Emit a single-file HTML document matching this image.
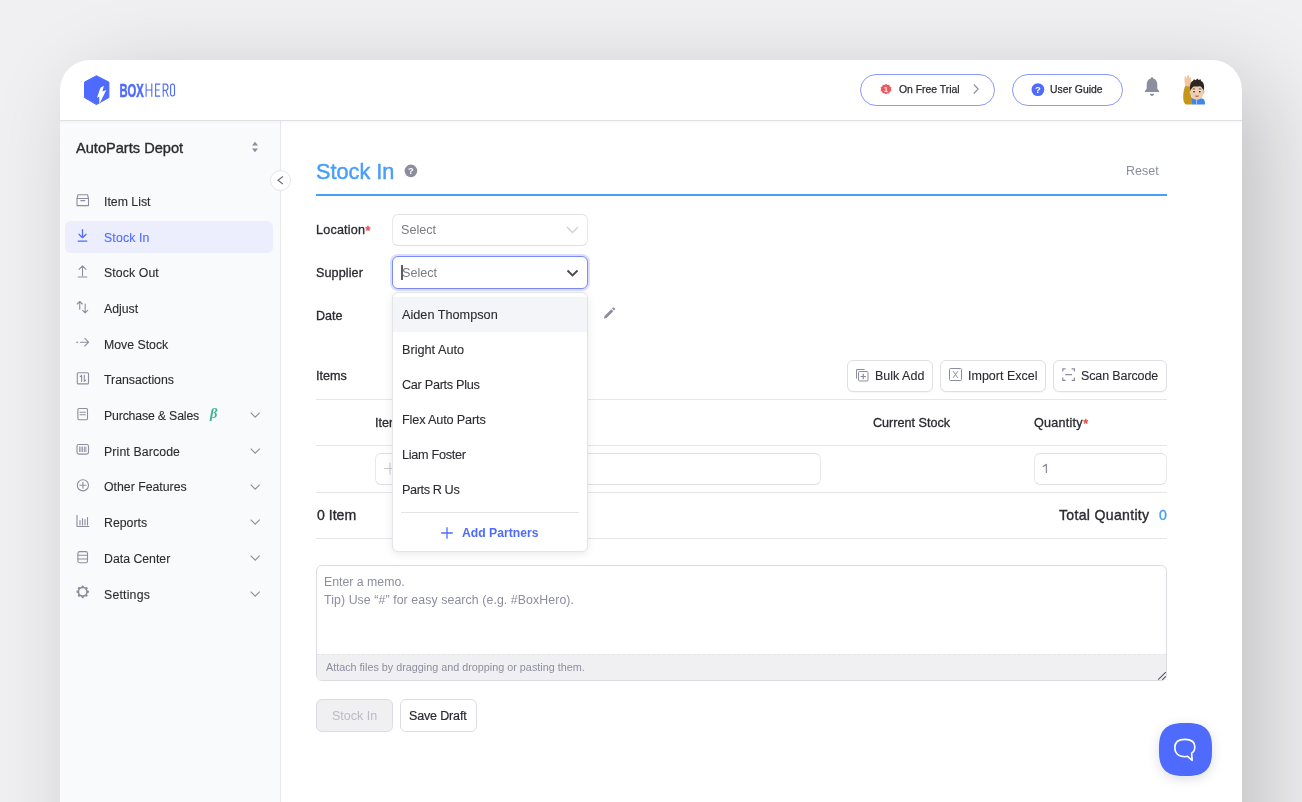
<!DOCTYPE html>
<html><head><meta charset="utf-8">
<style>
*{box-sizing:border-box;margin:0;padding:0}
html,body{width:1302px;height:802px;overflow:hidden}
body{-webkit-font-smoothing:antialiased;background:#f0f0f2;font-family:"Liberation Sans",sans-serif;color:#2a2b30;position:relative}
.abs{position:absolute}
.t{position:absolute;white-space:nowrap;line-height:1;will-change:transform}
.ic{position:absolute;overflow:visible;will-change:transform}
.ast{color:#f0474c;-webkit-text-stroke-width:0.5px;font-size:12.6px;margin-left:0.4px;position:relative;top:0.5px;letter-spacing:0;line-height:0}
</style></head>
<body>
<div class="abs" style="left:60px;top:60px;width:1182px;height:840px;background:#fff;border-radius:30px 30px 0 0;box-shadow:23px 23px 90px rgba(0,0,0,0.2)"></div>
<div class="abs" style="left:60px;top:121px;width:220px;height:681px;background:#f9fafc"></div>
<div class="abs" style="left:280px;top:121px;width:1px;height:681px;background:#e8e8ec"></div>
<div class="abs" style="left:60px;top:120px;width:1182px;height:1px;background:#e0e0e5"></div>
<div class="abs" style="left:60px;top:121px;width:1182px;height:3px;background:linear-gradient(rgba(0,0,0,0.035),rgba(0,0,0,0))"></div>
<svg class="ic" style="left:83px;top:74px;" width="28" height="32" viewBox="0 0 28 32"><path d="M13.4 1.75 L25.9 8.1 V23.6 L13.4 30.6 L1.5 23.6 V8.1 Z" fill="#4f6bfd" stroke="#4f6bfd" stroke-width="1.0" stroke-linejoin="round"/><path d="M20.9 11.8 L17.4 13.8 L14.0 23.8 L16.2 22.8 L16.4 30 L23.3 16.0 L19.4 17.5 Z" fill="#fff"/></svg>
<svg class="ic" style="left:119px;top:80px;" width="58" height="20" viewBox="0 0 58 20"><text x="0.4" y="16.7" font-family="Liberation Sans" font-weight="bold" font-size="18.3" fill="#4f6bfd" stroke="#4f6bfd" stroke-width="0.5" textLength="24.4" lengthAdjust="spacingAndGlyphs">BOX</text><g fill="none" stroke="#4f6bfd" stroke-width="1.1"><path d="M27.1 3.4 V16.7 M32.8 3.4 V16.7 M27.1 10 H32.8"/><path d="M41.2 4.1 H36.6 V16.1 H41.2 M36.6 10 H40.6"/><path d="M44.2 16.7 V4.1 H46.6 C48.4 4.1 49 5.3 49 7.2 C49 9.2 48.4 10.4 46.6 10.4 H44.2 M46.8 10.4 L49.3 16.7"/><rect x="51.6" y="4.1" width="3.9" height="11.9" rx="1.95"/></g></svg>
<div class="abs" style="left:860px;top:74px;width:135px;height:32px;border:1px solid #8a9af9;border-radius:16px;background:#fff"></div>
<svg class="ic" style="left:879px;top:82px;" width="14" height="14" viewBox="0 0 14 14"><path d="M7 0.8 L8.4 1.9 L10.2 1.7 L10.8 3.4 L12.4 4.3 L11.9 6 L12.4 7.8 L10.8 8.7 L10.2 10.4 L8.4 10.2 L7 11.3 L5.6 10.2 L3.8 10.4 L3.2 8.7 L1.6 7.8 L2.1 6 L1.6 4.3 L3.2 3.4 L3.8 1.7 L5.6 1.9 Z" fill="#f1585d" transform="translate(0,1)"/><text x="7" y="10.2" font-size="7" fill="#fff" text-anchor="middle" font-family="Liberation Sans" font-weight="bold">1</text></svg>
<div class="t" style="left:898.50px;top:84.60px;font-size:10.4px;color:#2a2b30;font-weight:normal;-webkit-text-stroke-width:0.25px;">On Free Trial</div>
<svg class="ic" style="left:972px;top:83px;" width="8" height="12" viewBox="0 0 8 12"><path d="M1.8 1.5 L6.2 6 L1.8 10.5" fill="none" stroke="#8c8e9e" stroke-width="1.1"/></svg>
<div class="abs" style="left:1012px;top:74px;width:111px;height:32px;border:1px solid #8a9af9;border-radius:16px;background:#fff"></div>
<svg class="ic" style="left:1031px;top:83px;" width="14" height="14" viewBox="0 0 14 14"><circle cx="6.9" cy="6.6" r="6.4" fill="#4f6bfd"/><text x="6.9" y="10.2" font-size="9.5" fill="#fff" text-anchor="middle" font-family="Liberation Sans" font-weight="bold">?</text></svg>
<div class="t" style="left:1050.30px;top:84.60px;font-size:10.4px;color:#2a2b30;font-weight:normal;-webkit-text-stroke-width:0.25px;">User Guide</div>
<svg class="ic" style="left:1143px;top:76px;" width="18" height="21" viewBox="0 0 18 21"><path d="M9 1.2 C9.9 1.2 10.2 1.8 10.2 2.5 C13 3.3 14.3 5.6 14.3 8.6 V12.6 L16.2 15.2 V16 H1.8 V15.2 L3.7 12.6 V8.6 C3.7 5.6 5 3.3 7.8 2.5 C7.8 1.8 8.1 1.2 9 1.2 Z" fill="#8c8e9e"/><path d="M6.9 17.8 H11.1 C11.1 19 10.2 19.9 9 19.9 C7.8 19.9 6.9 19 6.9 17.8Z" fill="#8c8e9e"/></svg>
<svg class="ic" style="left:1180px;top:74px;" width="30" height="32" viewBox="0 0 30 32"><path d="M5.6 11.5 C4 14 3 19 3.2 24 C3.3 27 4.2 29.3 5.6 30.4 L12.6 30.4 L12 24 C10.8 22 10.2 19 10.7 12 Z" fill="#c4961a"/><path d="M5.2 11.8 C4.6 8.5 4.3 5 4.6 3.2 C4.9 2 5.8 2 6.1 3 L6.6 5.5 C6.8 2.8 7 1.4 8 1.3 C8.9 1.3 9.1 2.3 9.2 4.5 C9.5 2.8 10.6 2.6 10.9 3.8 C11.2 5.5 11.3 8.5 10.8 12 C9 12.8 6.8 12.8 5.2 11.8 Z" fill="#efc6a2"/><path d="M11.5 24.6 C13.5 24 15 24.2 16.9 25 C19 24.2 21 24 23.5 25 C24.6 26 25.2 28.5 25 30.4 H12.2 Z" fill="#3f86e8"/><path d="M16.6 25 V30.4" stroke="#e8d8d0" stroke-width="0.7"/><ellipse cx="10.6" cy="18.2" rx="1.1" ry="1.7" fill="#e2b08a"/><ellipse cx="23.3" cy="18.2" rx="1.1" ry="1.7" fill="#e2b08a"/><ellipse cx="16.9" cy="18.6" rx="6.7" ry="7.2" fill="#f0cdac"/><path d="M10.4 17.2 C9.2 11 11 7.5 13 6.8 L14 5.2 L15.6 6.2 L17.4 4.6 L18.6 6 L20.6 5.2 L21 6.9 C23.5 7.8 24.8 11 23.7 17.2 C23.4 15.8 22.8 14.8 22.2 14.6 C21.6 13 20.6 12.2 19.6 12.2 C17.6 12.8 15.4 12.6 13.8 12.4 C12.8 12.8 12 13.8 11.8 14.6 C11.2 14.8 10.7 15.8 10.4 17.2 Z" fill="#2f2521"/><path d="M12.6 15.2 Q13.8 14.4 15.1 15 M18.7 15 Q20 14.4 21.2 15.2" stroke="#3a2b25" stroke-width="0.7" fill="none"/><ellipse cx="13.9" cy="17.6" rx="1.2" ry="1.3" fill="#fff"/><ellipse cx="19.9" cy="17.6" rx="1.2" ry="1.3" fill="#fff"/><circle cx="14" cy="17.7" r="0.85" fill="#2a1e1a"/><circle cx="19.8" cy="17.7" r="0.85" fill="#2a1e1a"/><path d="M14.6 21.8 Q16.9 23.9 19.3 21.8 Z" fill="#8e3e34"/></svg>
<div class="t" style="left:75.60px;top:141.34px;font-size:14.6px;color:#2a2b30;font-weight:normal;-webkit-text-stroke-width:0.35px;">AutoParts Depot</div>
<svg class="ic" style="left:251px;top:141px;" width="8" height="12" viewBox="0 0 8 12"><path d="M4 0.8 L7 4.5 H1 Z M4 11.2 L7 7.5 H1 Z" fill="#8c8e9e"/></svg>
<div class="abs" style="left:270px;top:170px;width:21px;height:21px;border:1px solid #e6e6ea;border-radius:50%;background:#fff"></div>
<svg class="ic" style="left:276px;top:176px;" width="9" height="9" viewBox="0 0 9 9"><path d="M6.9 0.6 L2 4.3 L6.9 8" fill="none" stroke="#6e707c" stroke-width="1.2"/></svg>
<div class="abs" style="left:65px;top:221px;width:208px;height:32px;background:#eceefd;border-radius:6px"></div>
<svg class="ic" style="left:75px;top:191.5px;" width="16" height="16" viewBox="0 0 16 16"><g fill="none" stroke="#8c8e9e" stroke-width="1.1" stroke-linecap="round" stroke-linejoin="round"><path d="M2 6.5 V13.6 H13.5 V6.5 Z M2 6.5 L3 2.7 H12.5 L13.5 6.5 M5.8 8.6 H9.8"/></g></svg>
<svg class="ic" style="left:75px;top:227.2px;" width="16" height="16" viewBox="0 0 16 16"><g fill="none" stroke="#4f6bfd" stroke-width="1.25" stroke-linecap="round" stroke-linejoin="round"><path d="M7.5 2.6 V10.5 M4 7.2 L7.5 10.7 L11 7.2 M3.2 14 H11.8"/></g></svg>
<svg class="ic" style="left:75px;top:262.9px;" width="16" height="16" viewBox="0 0 16 16"><g fill="none" stroke="#8c8e9e" stroke-width="1.1" stroke-linecap="round" stroke-linejoin="round"><path d="M7.5 12.6 V2.8 M4 6.3 L7.5 2.8 L11 6.3 M3.2 14 H11.8"/></g></svg>
<svg class="ic" style="left:75px;top:298.6px;" width="16" height="16" viewBox="0 0 16 16"><g fill="none" stroke="#8c8e9e" stroke-width="1.1" stroke-linecap="round" stroke-linejoin="round"><path d="M4.75 10.3 V2.5 M2.2 5 L4.75 2.5 L7.3 5 M10.15 5 V13.8 M7.6 11.3 L10.15 13.8 L12.7 11.3"/></g></svg>
<svg class="ic" style="left:75px;top:334.3px;" width="16" height="16" viewBox="0 0 16 16"><g fill="none" stroke="#8c8e9e" stroke-width="1.1" stroke-linecap="round" stroke-linejoin="round"><path d="M5.5 8.2 H13.6 M9.8 4.4 L13.6 8.2 L9.8 12"/><circle cx="2.2" cy="8.3" r="0.35" fill="#8c8e9e"/></g></svg>
<svg class="ic" style="left:75px;top:370.0px;" width="16" height="16" viewBox="0 0 16 16"><g fill="none" stroke="#8c8e9e" stroke-width="1.1" stroke-linecap="round" stroke-linejoin="round"><rect x="2.3" y="2.7" width="11.2" height="11.2" rx="1"/><path d="M6.6 11.4 V5.4 L5.2 6.6 M9.3 5.4 V11.4 L10.7 10.2"/></g></svg>
<svg class="ic" style="left:75px;top:405.70000000000005px;" width="16" height="16" viewBox="0 0 16 16"><g fill="none" stroke="#8c8e9e" stroke-width="1.1" stroke-linecap="round" stroke-linejoin="round"><rect x="2.9" y="2.5" width="9.6" height="11.3" rx="1.2"/><path d="M5 6.2 H10.4 M5 8.7 H10.4"/></g></svg>
<svg class="ic" style="left:75px;top:441.40000000000003px;" width="16" height="16" viewBox="0 0 16 16"><g fill="none" stroke="#8c8e9e" stroke-width="1.1" stroke-linecap="round" stroke-linejoin="round"><rect x="2" y="3.5" width="11.5" height="9.6" rx="1.8"/><path d="M4.6 6 V10.6 M6 6 V10.6 M7.6 6 V10.6 M9.4 6 V10.6 M10.9 6 V10.6" stroke-width="0.9"/></g></svg>
<svg class="ic" style="left:75px;top:477.1px;" width="16" height="16" viewBox="0 0 16 16"><g fill="none" stroke="#8c8e9e" stroke-width="1.1" stroke-linecap="round" stroke-linejoin="round"><circle cx="7.9" cy="8.3" r="5.6"/><path d="M7.9 5.3 V11.3 M4.9 8.3 H10.9"/></g></svg>
<svg class="ic" style="left:75px;top:512.8px;" width="16" height="16" viewBox="0 0 16 16"><g fill="none" stroke="#8c8e9e" stroke-width="1.1" stroke-linecap="round" stroke-linejoin="round"><path d="M2 2.4 V13.5 H13.8 M5 12 V7.5 M7.5 12 V5.5 M10 12 V6.5 M12.5 12 V4.5"/></g></svg>
<svg class="ic" style="left:75px;top:548.5px;" width="16" height="16" viewBox="0 0 16 16"><g fill="none" stroke="#8c8e9e" stroke-width="1.1" stroke-linecap="round" stroke-linejoin="round"><rect x="2.9" y="2.6" width="9.6" height="11.1" rx="1.8"/><path d="M2.9 6.3 H12.5 M2.9 10 H12.5"/></g></svg>
<svg class="ic" style="left:75px;top:584.2px;" width="16" height="16" viewBox="0 0 16 16"><g fill="none" stroke="#8c8e9e" stroke-width="1.15" stroke-linecap="round" stroke-linejoin="round"><circle cx="7.7" cy="7.8" r="4.3" stroke-width="1.6"/><circle cx="7.70" cy="2.70" r="1.25" fill="#8c8e9e" stroke="none"/><circle cx="11.31" cy="4.19" r="1.25" fill="#8c8e9e" stroke="none"/><circle cx="12.80" cy="7.80" r="1.25" fill="#8c8e9e" stroke="none"/><circle cx="11.31" cy="11.41" r="1.25" fill="#8c8e9e" stroke="none"/><circle cx="7.70" cy="12.90" r="1.25" fill="#8c8e9e" stroke="none"/><circle cx="4.09" cy="11.41" r="1.25" fill="#8c8e9e" stroke="none"/><circle cx="2.60" cy="7.80" r="1.25" fill="#8c8e9e" stroke="none"/><circle cx="4.09" cy="4.19" r="1.25" fill="#8c8e9e" stroke="none"/></g></svg>
<div class="t" style="left:103.80px;top:195.89px;font-size:12.3px;color:#2a2b30;font-weight:normal;-webkit-text-stroke-width:0.1px;">Item List</div>
<div class="t" style="left:103.80px;top:231.59px;font-size:12.3px;color:#4f6bfd;font-weight:normal;-webkit-text-stroke-width:0.1px;letter-spacing:0.14px;">Stock In</div>
<div class="t" style="left:103.80px;top:267.29px;font-size:12.3px;color:#2a2b30;font-weight:normal;-webkit-text-stroke-width:0.1px;letter-spacing:0.1px;">Stock Out</div>
<div class="t" style="left:103.80px;top:302.99px;font-size:12.3px;color:#2a2b30;font-weight:normal;-webkit-text-stroke-width:0.1px;">Adjust</div>
<div class="t" style="left:103.80px;top:338.69px;font-size:12.3px;color:#2a2b30;font-weight:normal;-webkit-text-stroke-width:0.1px;">Move Stock</div>
<div class="t" style="left:103.80px;top:374.39px;font-size:12.3px;color:#2a2b30;font-weight:normal;-webkit-text-stroke-width:0.1px;">Transactions</div>
<div class="t" style="left:103.80px;top:410.09px;font-size:12.3px;color:#2a2b30;font-weight:normal;-webkit-text-stroke-width:0.1px;letter-spacing:-0.17px;">Purchase &amp; Sales</div>
<div class="t" style="left:103.80px;top:445.79px;font-size:12.3px;color:#2a2b30;font-weight:normal;-webkit-text-stroke-width:0.1px;letter-spacing:0.12px;">Print Barcode</div>
<div class="t" style="left:103.80px;top:481.49px;font-size:12.3px;color:#2a2b30;font-weight:normal;-webkit-text-stroke-width:0.1px;">Other Features</div>
<div class="t" style="left:103.80px;top:517.19px;font-size:12.3px;color:#2a2b30;font-weight:normal;-webkit-text-stroke-width:0.1px;">Reports</div>
<div class="t" style="left:103.80px;top:552.89px;font-size:12.3px;color:#2a2b30;font-weight:normal;-webkit-text-stroke-width:0.1px;">Data Center</div>
<div class="t" style="left:103.80px;top:588.59px;font-size:12.3px;color:#2a2b30;font-weight:normal;-webkit-text-stroke-width:0.1px;letter-spacing:0.2px;">Settings</div>
<div class="t" style="left:209.80px;top:405.93px;font-size:14.5px;color:#3ab58f;font-weight:bold;font-style:italic;font-family:'Liberation Serif',serif">β</div>
<svg class="ic" style="left:250px;top:412px;" width="11" height="7" viewBox="0 0 11 7"><path d="M0.7 0.7 L5.2 5.2 L9.7 0.7" fill="none" stroke="#8c8e9e" stroke-width="1.1"/></svg>
<svg class="ic" style="left:250px;top:448px;" width="11" height="7" viewBox="0 0 11 7"><path d="M0.7 0.7 L5.2 5.2 L9.7 0.7" fill="none" stroke="#8c8e9e" stroke-width="1.1"/></svg>
<svg class="ic" style="left:250px;top:484px;" width="11" height="7" viewBox="0 0 11 7"><path d="M0.7 0.7 L5.2 5.2 L9.7 0.7" fill="none" stroke="#8c8e9e" stroke-width="1.1"/></svg>
<svg class="ic" style="left:250px;top:519px;" width="11" height="7" viewBox="0 0 11 7"><path d="M0.7 0.7 L5.2 5.2 L9.7 0.7" fill="none" stroke="#8c8e9e" stroke-width="1.1"/></svg>
<svg class="ic" style="left:250px;top:555px;" width="11" height="7" viewBox="0 0 11 7"><path d="M0.7 0.7 L5.2 5.2 L9.7 0.7" fill="none" stroke="#8c8e9e" stroke-width="1.1"/></svg>
<svg class="ic" style="left:250px;top:591px;" width="11" height="7" viewBox="0 0 11 7"><path d="M0.7 0.7 L5.2 5.2 L9.7 0.7" fill="none" stroke="#8c8e9e" stroke-width="1.1"/></svg>
<div class="t" style="left:316.00px;top:161.23px;font-size:21.7px;color:#489ef9;font-weight:normal;-webkit-text-stroke-width:0.45px;">Stock In</div>
<svg class="ic" style="left:404px;top:164px;" width="14" height="14" viewBox="0 0 14 14"><circle cx="6.9" cy="6.9" r="6.3" fill="#8c8e9e"/><text x="6.9" y="10.4" font-size="9.3" fill="#fff" text-anchor="middle" font-family="Liberation Sans" font-weight="bold">?</text></svg>
<div class="t" style="left:1126.20px;top:165.12px;font-size:12.5px;color:#8a8ea0;font-weight:normal;">Reset</div>
<div class="abs" style="left:316px;top:194px;width:851px;height:2px;background:#489ef9"></div>
<div class="t" style="left:316.20px;top:224.03px;font-size:12.6px;color:#2a2b30;font-weight:normal;-webkit-text-stroke-width:0.3px;letter-spacing:0.2px;">Location<span class="ast">*</span></div>
<div class="abs" style="left:392px;top:214px;width:196px;height:32px;border:1px solid #e8e8ed;border-top-color:#dedfe5;border-bottom-color:#dedfe5;border-radius:6px;background:#fff"></div>
<div class="t" style="left:401.00px;top:224.23px;font-size:12.6px;color:#7b7b80;font-weight:normal;">Select</div>
<svg class="ic" style="left:566px;top:226px;" width="13" height="8" viewBox="0 0 13 8"><path d="M1 1 L6.5 6.5 L12 1" fill="none" stroke="#cfd0d5" stroke-width="1.3"/></svg>
<div class="t" style="left:316.40px;top:267.23px;font-size:12.6px;color:#2a2b30;font-weight:normal;-webkit-text-stroke-width:0.3px;letter-spacing:0.1px;">Supplier</div>
<div class="abs" style="left:392px;top:256px;width:196px;height:33px;border:1.3px solid #7a8cf9;border-radius:6px;background:#fff;box-shadow:0 0 0 2px rgba(122,140,249,0.28)"></div>
<div class="abs" style="left:401px;top:265px;width:2px;height:15px;background:#5c5d63"></div>
<div class="t" style="left:401.50px;top:266.93px;font-size:12.6px;color:#7b7b80;font-weight:normal;">Select</div>
<svg class="ic" style="left:566px;top:269px;" width="13" height="9" viewBox="0 0 13 9"><path d="M1.5 1.5 L6.5 6.5 L11.5 1.5" fill="none" stroke="#4a4b50" stroke-width="1.9"/></svg>
<div class="t" style="left:316.40px;top:309.93px;font-size:12.6px;color:#2a2b30;font-weight:normal;-webkit-text-stroke-width:0.3px;">Date</div>
<svg class="ic" style="left:602px;top:306px;" width="14" height="14" viewBox="0 0 14 14"><path d="M2 12.4 L2.5 10 L9.3 3.2 L11.3 5.2 L4.5 12 Z M10 2.5 L10.9 1.6 C11.2 1.3 11.6 1.3 11.9 1.6 L12.9 2.6 C13.2 2.9 13.2 3.3 12.9 3.6 L12 4.5 Z" fill="#8c8e9e"/></svg>
<div class="t" style="left:316.40px;top:370.33px;font-size:12.6px;color:#2a2b30;font-weight:normal;-webkit-text-stroke-width:0.3px;">Items</div>
<div class="abs" style="left:847px;top:360px;width:86px;height:32px;border:1px solid #dedfe4;border-radius:6px;background:#fff;box-shadow:0 1px 1px rgba(0,0,0,0.04)"></div>
<div class="t" style="left:875.00px;top:369.62px;font-size:12.5px;color:#2a2b30;font-weight:normal;-webkit-text-stroke-width:0.1px;">Bulk Add</div>
<div class="abs" style="left:940px;top:360px;width:106px;height:32px;border:1px solid #dedfe4;border-radius:6px;background:#fff;box-shadow:0 1px 1px rgba(0,0,0,0.04)"></div>
<div class="t" style="left:968.30px;top:369.62px;font-size:12.5px;color:#2a2b30;font-weight:normal;-webkit-text-stroke-width:0.1px;">Import Excel</div>
<div class="abs" style="left:1053px;top:360px;width:114px;height:32px;border:1px solid #dedfe4;border-radius:6px;background:#fff;box-shadow:0 1px 1px rgba(0,0,0,0.04)"></div>
<div class="t" style="left:1081.40px;top:369.62px;font-size:12.5px;color:#2a2b30;font-weight:normal;-webkit-text-stroke-width:0.1px;letter-spacing:-0.12px;">Scan Barcode</div>
<svg class="ic" style="left:855px;top:368px;" width="15" height="15" viewBox="0 0 15 15"><g fill="none" stroke="#8c8e9e" stroke-width="1"><path d="M1.5 10.5 V1.5 H9.5"/><rect x="3.5" y="3.5" width="9.5" height="9.5" rx="1"/><path d="M8.25 5.8 V11.2 M5.55 8.5 H10.95" stroke-width="1.2"/></g></svg>
<svg class="ic" style="left:949px;top:368px;" width="14" height="14" viewBox="0 0 14 14"><g fill="none" stroke="#8c8e9e" stroke-width="1"><rect x="0.5" y="0.5" width="12" height="12" rx="1"/><path d="M4.2 3.2 L8.8 9.8 M8.8 3.2 L4.2 9.8"/></g></svg>
<svg class="ic" style="left:1062px;top:368px;" width="14" height="14" viewBox="0 0 14 14"><g fill="none" stroke="#8c8e9e" stroke-width="1.2"><path d="M0.8 3.6 V0.8 H3.6 M9.6 0.8 H12.4 V3.6 M12.4 9.6 V12.4 H9.6 M3.6 12.4 H0.8 V9.6 M3.2 6.6 H10"/></g></svg>
<div class="abs" style="left:316px;top:399px;width:851px;height:1px;background:#e6e6ea"></div>
<div class="t" style="left:374.50px;top:417.33px;font-size:12.6px;color:#2a2b30;font-weight:normal;-webkit-text-stroke-width:0.3px;">Item</div>
<div class="t" style="left:873.20px;top:417.33px;font-size:12.6px;color:#2a2b30;font-weight:normal;-webkit-text-stroke-width:0.3px;">Current Stock</div>
<div class="t" style="left:1033.60px;top:417.33px;font-size:12.6px;color:#2a2b30;font-weight:normal;-webkit-text-stroke-width:0.3px;letter-spacing:0.25px;">Quantity<span class="ast">*</span></div>
<div class="abs" style="left:316px;top:445px;width:851px;height:1px;background:#e6e6ea"></div>
<div class="abs" style="left:375px;top:453px;width:446px;height:32px;border:1px solid #e8e8ed;border-top-color:#dedfe5;border-bottom-color:#dedfe5;border-radius:6px;background:#fff"></div>
<svg class="ic" style="left:382px;top:461px;" width="16" height="16" viewBox="0 0 16 16"><path d="M8 1.5 V13.5 M2 7.5 H14" stroke="#c9cad2" stroke-width="1.1"/></svg>
<div class="abs" style="left:1034px;top:453px;width:133px;height:32px;border:1px solid #e8e8ed;border-top-color:#dedfe5;border-bottom-color:#dedfe5;border-radius:6px;background:#fff"></div>
<svg class="ic" style="left:1040px;top:462px;" width="10" height="14" viewBox="0 0 10 14"><path d="M6.4 11.1 V2.4 L2.9 4.8" fill="none" stroke="#8c8e9e" stroke-width="1.3" stroke-linejoin="round"/></svg>
<div class="abs" style="left:316px;top:492px;width:851px;height:1px;background:#e6e6ea"></div>
<div class="t" style="left:316.50px;top:508.26px;font-size:14.1px;color:#2a2b30;font-weight:normal;-webkit-text-stroke-width:0.35px;">0 Item</div>
<div class="t" style="left:1059.20px;top:508.26px;font-size:14.1px;color:#2a2b30;font-weight:normal;-webkit-text-stroke-width:0.35px;letter-spacing:0.3px;">Total Quantity</div>
<div class="t" style="left:1158.60px;top:508.26px;font-size:14.1px;color:#489ef9;font-weight:normal;-webkit-text-stroke-width:0.4px;">0</div>
<div class="abs" style="left:316px;top:538px;width:851px;height:1px;background:#e6e6ea"></div>
<div class="abs" style="left:316px;top:565px;width:851px;height:116px;border:1px solid #dcdde3;border-radius:6px;background:#fff;overflow:hidden"></div>
<div class="abs" style="left:317px;top:654px;width:849px;height:26px;background:#f0f0f3;border-top:1px dashed #e6e6ea;border-radius:0 0 5px 5px"></div>
<div class="t" style="left:324.00px;top:576.09px;font-size:12.3px;color:#8c8e9e;font-weight:normal;">Enter a memo.</div>
<div class="t" style="left:324.00px;top:593.99px;font-size:12.3px;color:#8c8e9e;font-weight:normal;letter-spacing:0.1px;">Tip) Use “#” for easy search (e.g. #BoxHero).</div>
<div class="t" style="left:325.60px;top:662.16px;font-size:10.8px;color:#8c8e9e;font-weight:normal;">Attach files by dragging and dropping or pasting them.</div>
<svg class="ic" style="left:1156px;top:670px;" width="11" height="11" viewBox="0 0 11 11"><path d="M2.2 9.6 L9.8 2.2 M6.3 9.8 L9.8 6.3" fill="none" stroke="#55575e" stroke-width="1.1"/></svg>
<div class="abs" style="left:316px;top:699px;width:77px;height:33px;border:1px solid #dcdde3;border-radius:6px;background:#f0f0f3"></div>
<div class="t" style="left:332.20px;top:709.72px;font-size:12.5px;color:#babbc4;font-weight:normal;">Stock In</div>
<div class="abs" style="left:400px;top:699px;width:77px;height:33px;border:1px solid #dcdde3;border-radius:6px;background:#fff"></div>
<div class="t" style="left:409.40px;top:709.72px;font-size:12.5px;color:#2a2b30;font-weight:normal;-webkit-text-stroke-width:0.2px;letter-spacing:-0.15px;">Save Draft</div>
<div class="abs" style="left:392px;top:292px;width:196px;height:260px;background:#fff;border:1px solid #e3e3e8;border-radius:6px;box-shadow:0 2px 8px rgba(0,0,0,0.09);overflow:hidden"></div>
<div class="abs" style="left:393px;top:297px;width:194px;height:35px;background:#f4f5f9"></div>
<div class="t" style="left:401.50px;top:308.95px;font-size:12.7px;color:#2a2b30;font-weight:normal;-webkit-text-stroke-width:0.1px;">Aiden Thompson</div>
<div class="t" style="left:401.50px;top:344.05px;font-size:12.7px;color:#2a2b30;font-weight:normal;-webkit-text-stroke-width:0.1px;">Bright Auto</div>
<div class="t" style="left:401.50px;top:379.15px;font-size:12.7px;color:#2a2b30;font-weight:normal;-webkit-text-stroke-width:0.1px;letter-spacing:-0.3px;">Car Parts Plus</div>
<div class="t" style="left:401.50px;top:414.25px;font-size:12.7px;color:#2a2b30;font-weight:normal;-webkit-text-stroke-width:0.1px;letter-spacing:-0.16px;">Flex Auto Parts</div>
<div class="t" style="left:401.50px;top:449.35px;font-size:12.7px;color:#2a2b30;font-weight:normal;-webkit-text-stroke-width:0.1px;letter-spacing:-0.3px;">Liam Foster</div>
<div class="t" style="left:401.50px;top:484.45px;font-size:12.7px;color:#2a2b30;font-weight:normal;-webkit-text-stroke-width:0.1px;letter-spacing:-0.4px;">Parts R Us</div>
<div class="abs" style="left:401px;top:512px;width:178px;height:1px;background:#e3e3e8"></div>
<svg class="ic" style="left:440px;top:526px;" width="14" height="14" viewBox="0 0 14 14"><path d="M7 1.2 V12.8 M1.2 7 H12.8" stroke="#4f6bfd" stroke-width="1.3"/></svg>
<div class="t" style="left:461.80px;top:526.67px;font-size:12.2px;color:#4f6bfd;font-weight:bold;">Add Partners</div>
<svg class="ic" style="left:1159px;top:723px;filter:drop-shadow(0 3px 6px rgba(0,0,0,0.13))" width="53" height="53" viewBox="0 0 53 53"><path d="M53.00 26.50 L52.97 29.72 L52.90 31.78 L52.77 33.54 L52.59 35.13 L52.35 36.59 L52.07 37.95 L51.73 39.23 L51.34 40.44 L50.90 41.58 L50.41 42.65 L49.87 43.67 L49.28 44.63 L48.63 45.54 L47.94 46.39 L47.19 47.19 L46.39 47.94 L45.54 48.63 L44.63 49.28 L43.67 49.87 L42.65 50.41 L41.58 50.90 L40.44 51.34 L39.23 51.73 L37.95 52.07 L36.59 52.35 L35.13 52.59 L33.54 52.77 L31.78 52.90 L29.72 52.97 L26.50 53.00 L23.28 52.97 L21.22 52.90 L19.46 52.77 L17.87 52.59 L16.41 52.35 L15.05 52.07 L13.77 51.73 L12.56 51.34 L11.42 50.90 L10.35 50.41 L9.33 49.87 L8.37 49.28 L7.46 48.63 L6.61 47.94 L5.81 47.19 L5.06 46.39 L4.37 45.54 L3.72 44.63 L3.13 43.67 L2.59 42.65 L2.10 41.58 L1.66 40.44 L1.27 39.23 L0.93 37.95 L0.65 36.59 L0.41 35.13 L0.23 33.54 L0.10 31.78 L0.03 29.72 L0.00 26.50 L0.03 23.28 L0.10 21.22 L0.23 19.46 L0.41 17.87 L0.65 16.41 L0.93 15.05 L1.27 13.77 L1.66 12.56 L2.10 11.42 L2.59 10.35 L3.13 9.33 L3.72 8.37 L4.37 7.46 L5.06 6.61 L5.81 5.81 L6.61 5.06 L7.46 4.37 L8.37 3.72 L9.33 3.13 L10.35 2.59 L11.42 2.10 L12.56 1.66 L13.77 1.27 L15.05 0.93 L16.41 0.65 L17.87 0.41 L19.46 0.23 L21.22 0.10 L23.28 0.03 L26.50 0.00 L29.72 0.03 L31.78 0.10 L33.54 0.23 L35.13 0.41 L36.59 0.65 L37.95 0.93 L39.23 1.27 L40.44 1.66 L41.58 2.10 L42.65 2.59 L43.67 3.13 L44.63 3.72 L45.54 4.37 L46.39 5.06 L47.19 5.81 L47.94 6.61 L48.63 7.46 L49.28 8.37 L49.87 9.33 L50.41 10.35 L50.90 11.42 L51.34 12.56 L51.73 13.77 L52.07 15.05 L52.35 16.41 L52.59 17.87 L52.77 19.46 L52.90 21.22 L52.97 23.28 Z" fill="#4f6bfd"/></svg>
<svg class="ic" style="left:1171px;top:736px;" width="30" height="28" viewBox="0 0 30 28"><path d="M13.8 3.4 C20 3.4 23.8 5.8 23.8 10.8 C23.8 14.3 22.3 16.3 20.6 17.1 L21.2 24.4 L16.6 20.3 C15.7 20.6 14.8 20.7 13.8 20.7 C7.4 20.7 3.8 17.2 3.8 11.6 C3.8 6.2 7.5 3.4 13.8 3.4 Z" fill="none" stroke="#fff" stroke-width="1.6" stroke-linejoin="round"/></svg>
</body></html>
